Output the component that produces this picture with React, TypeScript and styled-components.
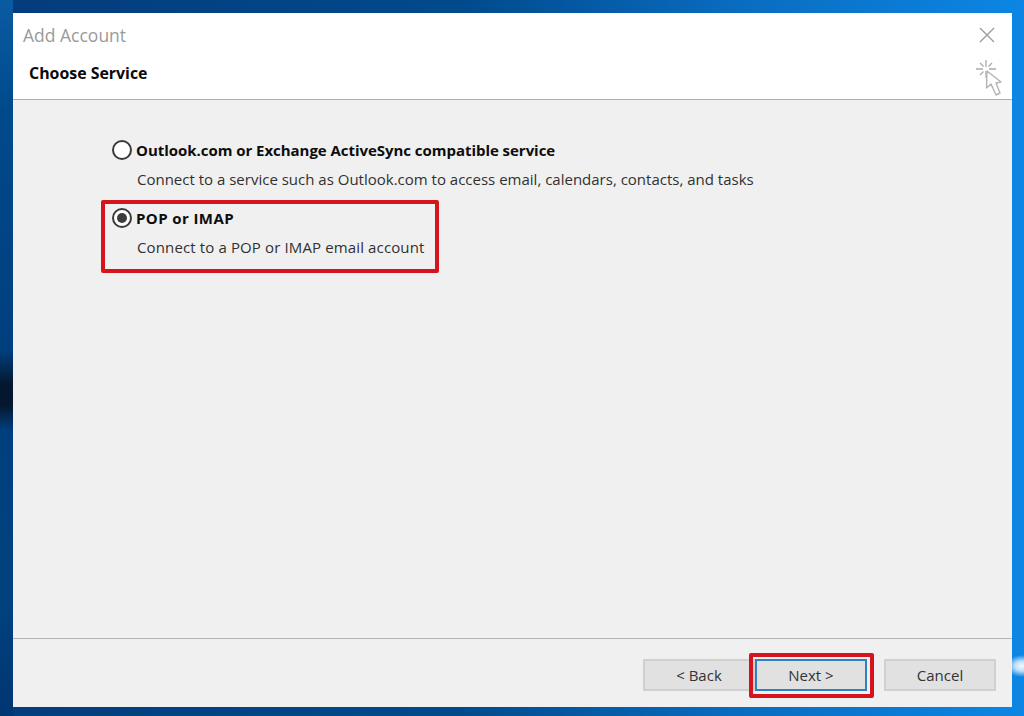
import React from 'react';
import styled, { createGlobalStyle } from 'styled-components';

const Global = createGlobalStyle`
html, body {
    margin: 0;
    padding: 0;
}
body {
    font-family: "Open Sans", "Noto Sans", sans-serif;
}
`

const Desktop = styled.div`
    box-sizing: border-box;
    width: 1024px;
    height: 716px;
    padding: 13px 12px 9px 13px;
    overflow: hidden;
    background:
        radial-gradient(ellipse 16px 11px at 1022px 666px, #f2f9ff 0%, rgba(234,246,255,.8) 45%, rgba(234,246,255,0) 100%),
        linear-gradient(180deg, #0a5ba3 0px, #004a8c 110px, #003f7e 350px, #04172e 385px, #04172e 405px, #003f7e 430px, #00427f 600px, #003672 716px) left top / 13px 100% no-repeat,
        linear-gradient(90deg, #043c7c 0%, #004a8c 45%, #0a6cc0 72%, #0c86e4 100%);
`

const Dialog = styled.div`
    height: 100%;
    display: flex;
    flex-direction: column;
    background: #f0f0f0;
`

const Header = styled.header`
    height: 87px;
    flex: none;
    box-sizing: border-box;
    background: #fff;
    border-bottom: 1px solid #aeaeae;
    display: flex;
    flex-direction: column;
`

const TitleBar = styled.div`
    height: 44px;
    flex: none;
    padding: 0 17px 0 10px;
    display: flex;
    align-items: center;
    justify-content: space-between;
`

const Title = styled.div`
    font-size: 17.5px;
    color: #9a9a9a;
`

const PageBar = styled.div`
    flex: 1;
    min-height: 0;
    padding: 1px 9px 0 16px;
    display: flex;
    align-items: flex-start;
    justify-content: space-between;
`

const PageTitle = styled.div`
    font-size: 15.9px;
    font-weight: 700;
    line-height: 30px;
    color: #0a0a0a;
`

const Body = styled.main`
    flex: 1;
    padding: 36px 0 0 88px;
    display: flex;
    flex-direction: column;
`

const Option = styled.div<{ $marked?: boolean }>`
    box-sizing: border-box;
    width: ${(p) => (p.$marked ? '338px' : 'auto')};
    height: ${(p) => (p.$marked ? '73px' : '64px')};
    padding: ${(p) => (p.$marked ? '0 0 0 7px' : '0 0 0 11px')};
    ${(p) => p.$marked && 'border: 4px solid #d5151b; border-radius: 2px;'}
`

const OptionRow = styled.div`
    display: flex;
    align-items: center;
    gap: 4px;
    height: 28px;
`

const Radio = styled.span<{ $checked?: boolean }>`
    box-sizing: border-box;
    width: 20px;
    height: 20px;
    flex: none;
    border: 2px solid #3a3a3a;
    border-radius: 50%;
    background: #fff;
    display: flex;
    align-items: center;
    justify-content: center;
    &::after {
        content: '';
        display: ${(p) => (p.$checked ? 'block' : 'none')};
        width: 10px;
        height: 10px;
        border-radius: 50%;
        background: #3c3c3c;
    }
`

const OptionLabel = styled.span<{ $spacing?: number }>`
    font-size: 15px;
    font-weight: 700;
    letter-spacing: ${(p) => p.$spacing || 0}px;
    color: #0d0d0d;
`

const OptionHint = styled.div<{ $spacing?: number }>`
    margin: 1px 0 0 25px;
    font-size: 15px;
    line-height: 28px;
    letter-spacing: ${(p) => p.$spacing || 0}px;
    color: #303030;
    white-space: nowrap;
`

const Footer = styled.footer`
    height: 69px;
    flex: none;
    box-sizing: border-box;
    border-top: 1px solid #b4b4b4;
    padding: 20px 16px 0 0;
    display: flex;
    justify-content: flex-end;
    align-items: flex-start;
`

const Button = styled.button<{ $primary?: boolean; $gap?: number }>`
    box-sizing: border-box;
    width: 112px;
    height: 32px;
    margin-left: ${(p) => p.$gap || 0}px;
    padding: 0;
    background: #e1e1e1;
    border: ${(p) => (p.$primary ? '2px solid #2f7fc4' : '2px solid #d0d0d0')};
    font-family: inherit;
    font-size: 15px;
    color: #333;
    position: relative;
    ${(p) => p.$primary && `
    &::after {
        content: '';
        position: absolute;
        inset: -8px -9px -9px -8px;
        border: 4px solid #d5151b;
        border-radius: 2px;
        pointer-events: none;
    }`}
`

const CloseIcon = () => (
    <svg width="16" height="16" viewBox="0 0 16 16">
        <path d="M1 1 L15 15 M15 1 L1 15" stroke="#9c9c9c" strokeWidth="1.4" fill="none" />
    </svg>
)

const WizardIcon = () => (
    <svg width="28" height="38" viewBox="0 0 28 38">
        <path d="M11 2 V9 M11 13 V20 M1 11 H8 M14 11 H21 M5 5 L8.500 8.500 M17 5 L13.500 8.500 M5 17 L8.500 13.500" stroke="#aaaaaa" strokeWidth="1.3" fill="none" />
        <path d="M12 13 L11.500 30 L16 26 L21 37 L25 35 L21 25 L26 24 Z" fill="#fff" stroke="#b4b4b4" strokeWidth="1.4" strokeLinejoin="round" />
    </svg>
)

export default function App() {
    return <Desktop>
        <Global />
        <Dialog>
            <Header>
                <TitleBar>
                    <Title>Add Account</Title>
                    <CloseIcon />
                </TitleBar>
                <PageBar>
                    <PageTitle>Choose Service</PageTitle>
                    <WizardIcon />
                </PageBar>
            </Header>
            <Body>
                <Option>
                    <OptionRow>
                        <Radio />
                        <OptionLabel $spacing={-0.04}>Outlook.com or Exchange ActiveSync compatible service</OptionLabel>
                    </OptionRow>
                    <OptionHint>Connect to a service such as Outlook.com to access email, calendars, contacts, and tasks</OptionHint>
                </Option>
                <Option $marked>
                    <OptionRow>
                        <Radio $checked />
                        <OptionLabel $spacing={0.4}>POP or IMAP</OptionLabel>
                    </OptionRow>
                    <OptionHint $spacing={0.13}>Connect to a POP or IMAP email account</OptionHint>
                </Option>
            </Body>
            <Footer>
                <Button>&lt; Back</Button>
                <Button $primary>Next &gt;</Button>
                <Button $gap={17}>Cancel</Button>
            </Footer>
        </Dialog>
    </Desktop>
}
